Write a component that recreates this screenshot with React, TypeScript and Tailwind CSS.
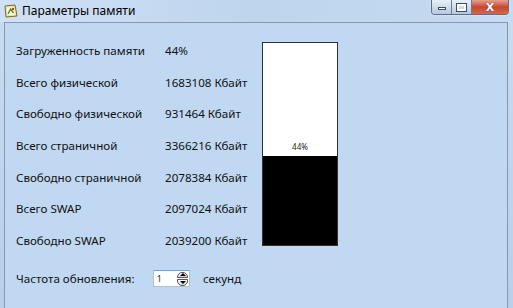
import React from "react";

const rows: [string, string][] = [
  ["Загруженность памяти", "44%"],
  ["Всего физической", "1683108 Кбайт"],
  ["Свободно физической", "931464 Кбайт"],
  ["Всего страничной", "3366216 Кбайт"],
  ["Свободно страничной", "2078384 Кбайт"],
  ["Всего SWAP", "2097024 Кбайт"],
  ["Свободно SWAP", "2039200 Кбайт"],
];

export default function App() {
  return (
    <div
      className="w-[513px] h-[308px] overflow-hidden flex flex-col bg-gradient-to-b from-[#c9dcf1] to-[#b8d0ea] text-[#111]"
      style={{ fontFamily: '"Noto Sans", "Open Sans", sans-serif' }}
    >
      {/* Title bar */}
      <div className="h-[22px] flex items-start relative bg-gradient-to-r from-[#cfe1f4] via-[#bed5ee] to-[#c6dbf1]">
        <div className="flex items-center h-[21px] pl-[4px] gap-[4px]">
          <svg width="14" height="14" viewBox="0 0 14 14">
            <path d="M1 2 L11 1 L13 12 L2 13 Z" fill="#f1e49a" stroke="#7a6a2c" />
            <rect x="3" y="3.5" width="7.5" height="7.5" fill="#fffbe0" />
            <path d="M4 10 L6.5 5 L9.5 9" stroke="#3a8a2a" strokeWidth="1.3" fill="none" />
            <circle cx="9" cy="5" r="1.2" fill="#c8352a" />
          </svg>
          <span className="text-[12px] leading-none text-black">Параметры памяти</span>
        </div>
        <div className="ml-auto mr-[4px] flex h-[15px] rounded-b-[4px] border border-t-0 border-[#5d6f86] overflow-hidden shadow-[0_0_2px_rgba(255,255,255,0.8)]">
          <div className="w-[20px] h-full flex items-center justify-center bg-gradient-to-b from-[#e8eff8] to-[#b7c9df] border-r border-[#6a7d95]">
            <div className="w-[8px] h-[3px] bg-white border border-[#3b4d63] mt-[3px]" />
          </div>
          <div className="w-[20px] h-full flex items-center justify-center bg-gradient-to-b from-[#e8eff8] to-[#b7c9df] border-r border-[#6a7d95]">
            <div className="w-[9px] h-[7px] border-2 border-white outline outline-1 outline-[#3b4d63]" />
          </div>
          <div className="w-[36px] h-full flex items-center justify-center bg-gradient-to-b from-[#e3a090] via-[#c9442e] to-[#d26a4c]">
            <span className="text-white font-bold text-[11px] leading-none" style={{ fontFamily: '"DejaVu Sans", sans-serif', textShadow: "0 0 1px #5a1a10" }}>
              X
            </span>
          </div>
        </div>
      </div>

      {/* Client area */}
      <div className="flex-1 ml-[4px] mr-[5px] border border-b-0 border-[#8399b2] bg-[#c0d8f1] pl-[11px] pt-[12px] text-[11.6px]">
        <div className="flex">
          <div className="flex flex-col w-[246px]">
            {rows.map(([l, v]) => (
              <div key={l} className="h-[31.67px] flex items-center">
                <span className="w-[149px] whitespace-nowrap">{l}</span>
                <span className="whitespace-nowrap">{v}</span>
              </div>
            ))}
          </div>
          <div className="mt-[7px] w-[76px] h-[204px] border border-[#333] bg-white flex flex-col">
            <div className="flex-1 flex items-end justify-center pb-[5px]">
              <span className="text-[8px] leading-none text-[#222]">44%</span>
            </div>
            <div className="h-[89px] bg-black" />
          </div>
        </div>
        <div className="flex items-center mt-[12px] h-[20px]">
          <span className="w-[137px] whitespace-nowrap">Частота обновления:</span>
          <div className="w-[37px] h-[17px] bg-white border border-[#a9c3de] border-t-[#7da2ce] flex items-center pl-[3px] pr-[1px]">
            <span className="text-[8px] leading-none flex-1">1</span>
            <div className="w-[11px] h-[14px] flex flex-col gap-[1px]">
              <div className="flex-1 rounded-t-[5px] border border-[#555] bg-gradient-to-b from-white to-[#d8d8d8] flex items-center justify-center">
                <div className="w-0 h-0 border-l-[3px] border-r-[3px] border-b-[3px] border-l-transparent border-r-transparent border-b-black" />
              </div>
              <div className="flex-1 rounded-b-[5px] border border-[#555] bg-gradient-to-b from-white to-[#d8d8d8] flex items-center justify-center">
                <div className="w-0 h-0 border-l-[3px] border-r-[3px] border-t-[3px] border-l-transparent border-r-transparent border-t-black" />
              </div>
            </div>
          </div>
          <span className="ml-[13px]">секунд</span>
        </div>
      </div>
    </div>
  );
}
